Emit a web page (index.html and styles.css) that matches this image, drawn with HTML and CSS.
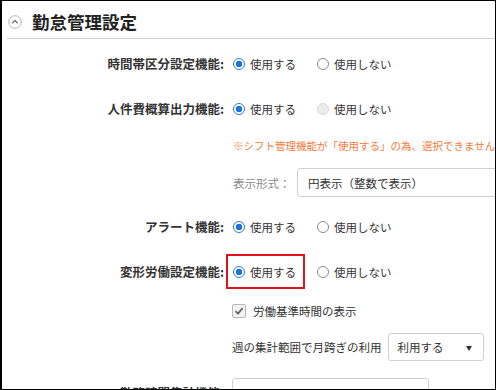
FILE: index.html
```html
<!DOCTYPE html>
<html lang="ja">
<head>
<meta charset="utf-8">
<link rel="stylesheet" href="styles.css">
</head>
<body>
<div class="frame">
  <div class="header">
    <span class="toggle">
      <svg width="14" height="14" viewBox="0 0 14 14"><circle cx="7" cy="7" r="6.3" fill="#fff" stroke="#b5b5b5" stroke-width="1"/><path d="M4.3 8.3 L7 5.6 L9.7 8.3" fill="none" stroke="#777" stroke-width="1.4"/></svg>
    </span>
    <h1 class="title">勤怠管理設定</h1>
  </div>

  <div class="row r1">
    <div class="label">時間帯区分設定機能:</div>
    <div class="ctrl">
      <span class="opt"><span class="radio on"></span>使用する</span>
      <span class="opt"><span class="radio"></span>使用しない</span>
    </div>
  </div>

  <div class="row r2">
    <div class="label">人件費概算出力機能:</div>
    <div class="ctrl">
      <span class="opt"><span class="radio on"></span>使用する</span>
      <span class="opt"><span class="radio dis"></span>使用しない</span>
    </div>
  </div>

  <div class="row note-row">
    <div class="label"></div>
    <div class="ctrl note">※シフト管理機能が「使用する」の為、選択できません。</div>
  </div>

  <div class="row fmt-row">
    <div class="label"></div>
    <div class="ctrl">
      <span class="sub-label">表示形式：</span>
      <span class="select wide">円表示（整数で表示）</span>
    </div>
  </div>

  <div class="row r3">
    <div class="label">アラート機能:</div>
    <div class="ctrl">
      <span class="opt"><span class="radio on"></span>使用する</span>
      <span class="opt"><span class="radio"></span>使用しない</span>
    </div>
  </div>

  <div class="row r4">
    <div class="label">変形労働設定機能:</div>
    <div class="ctrl">
      <span class="opt hl"><span class="radio on"></span>使用する<span class="mark"></span></span>
      <span class="opt"><span class="radio"></span>使用しない</span>
    </div>
  </div>

  <div class="row chk-row">
    <div class="label"></div>
    <div class="ctrl">
      <span class="check">
        <svg width="10" height="10" viewBox="0 0 10 10"><path d="M1.5 5.2 L4 7.6 L8.6 2.2" fill="none" stroke="#666" stroke-width="1.8"/></svg>
      </span>
      <span class="chk-text">労働基準時間の表示</span>
    </div>
  </div>

  <div class="row week-row">
    <div class="label"></div>
    <div class="ctrl">
      <span class="week-label">週の集計範囲で月跨ぎの利用</span>
      <span class="select small">利用する<span class="caret"></span></span>
    </div>
  </div>

  <div class="row last-row">
    <div class="label">勤務時間集計機能:</div>
    <div class="ctrl">
      <span class="select last">&nbsp;</span>
    </div>
  </div>
</div>
</body>
</html>
```

FILE: styles.css
```css
html, body {
  margin: 0;
  padding: 0;
  background: #fff;
}

.frame {
  width: 496px;
  height: 390px;
  box-sizing: border-box;
  border: 1px solid #000;
  border-left-width: 2px;
  overflow: hidden;
  background: #fff;
  font-family: "Noto Sans CJK JP", "Noto Sans", sans-serif;
  color: #333;
}

.header {
  display: flex;
  align-items: center;
  height: 32px;
  padding-top: 5px;
  margin-left: 5px;
  border-bottom: 1px solid #cfcfcf;
}

.toggle {
  display: flex;
  width: 14px;
  height: 14px;
  margin-left: 1px;
}

.title {
  margin: 0 0 0 10px;
  font-size: 17.5px;
  font-weight: 700;
  color: #222;
  letter-spacing: 0;
  line-height: 20px;
}

.row {
  display: grid;
  grid-template-columns: 222px 1fr;
  column-gap: 7px;
  align-items: center;
  white-space: nowrap;
}

.label {
  text-align: right;
  font-size: 12.5px;
  font-weight: 700;
  color: #333;
  line-height: 20px;
}

.ctrl {
  display: flex;
  align-items: center;
  font-size: 11.5px;
  line-height: 20px;
}

.r1 { margin-top: 15px; height: 20px; }
.r2 { margin-top: 25px; height: 20px; }
.note-row { margin-top: 19px; height: 16px; }
.fmt-row { margin-top: 14px; height: 29px; }
.r3 { margin-top: 20px; height: 20px; }
.r4 { margin-top: 25px; height: 20px; }
.chk-row { margin-top: 19px; height: 20px; }
.week-row { margin-top: 12px; height: 28px; }
.last-row { margin-top: 17px; height: 30px; }

.opt {
  display: inline-flex;
  align-items: center;
  margin-left: 2px;
  color: #333;
}

.opt + .opt {
  margin-left: 21px;
}

.radio {
  box-sizing: border-box;
  width: 12px;
  height: 12px;
  border-radius: 50%;
  border: 1px solid #8a8a8a;
  background: #fff;
  margin-right: 5px;
  flex: none;
}

.radio.on {
  border-color: #2b7bd6;
  background: radial-gradient(circle, #1f74d8 0 3px, #fff 3.6px);
}

.radio.dis {
  border-color: #d8d8d8;
  background: #ececec;
}

.hl {
  position: relative;
}

.mark {
  position: absolute;
  left: -7px;
  top: -8px;
  width: 79px;
  height: 35px;
  box-sizing: border-box;
  border: 2px solid #e0121c;
}

.note {
  color: #f47b3a;
  font-size: 10.5px;
  line-height: 16px;
  margin-left: 2px;
}

.sub-label {
  color: #8a8a8a;
  font-size: 11.5px;
  margin-left: 2px;
  width: 64px;
}

.select {
  display: inline-flex;
  align-items: center;
  box-sizing: border-box;
  border: 1px solid #cfcfcf;
  border-radius: 3px;
  background: #fff;
  color: #333;
  font-size: 11.5px;
  flex: none;
}

.select.wide {
  width: 220px;
  height: 29px;
  padding-left: 10px;
}

.select.small {
  width: 96px;
  height: 28px;
  padding-left: 9px;
  margin-left: 6px;
  position: relative;
}

.select.last {
  width: 197px;
  height: 30px;
  margin-left: 1px;
}

.caret {
  position: absolute;
  right: 11px;
  top: 12px;
  width: 0;
  height: 0;
  border-left: 3.5px solid transparent;
  border-right: 3.5px solid transparent;
  border-top: 5px solid #333;
}

.check {
  display: inline-flex;
  align-items: center;
  justify-content: center;
  box-sizing: border-box;
  width: 14px;
  height: 14px;
  border: 1px solid #b8b8b8;
  border-radius: 2px;
  background: #f4f4f4;
  margin-left: 1px;
}

.chk-text {
  margin-left: 7px;
}

.week-label {
  margin-left: 1px;
}
```
